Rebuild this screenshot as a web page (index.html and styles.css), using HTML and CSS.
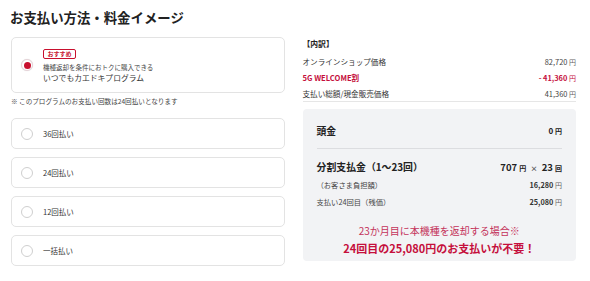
FILE: index.html
```html
<!DOCTYPE html>
<html lang="ja">
<head>
<meta charset="utf-8">
<link rel="stylesheet" href="styles.css">
</head>
<body>
<div class="page">
  <h1 class="title">お支払い方法・料金イメージ</h1>
  <div class="cols">
    <div class="left">
      <div class="card card-main">
        <span class="radio radio-on"></span>
        <div class="card-body">
          <span class="badge">おすすめ</span>
          <div class="sub">機種返却を条件におトクに購入できる</div>
          <div class="main-label">いつでもカエドキプログラム</div>
        </div>
      </div>
      <p class="note">※ このプログラムのお支払い回数は24回払いとなります</p>
      <div class="card card-opt"><span class="radio"></span><span class="opt-label">36回払い</span></div>
      <div class="card card-opt"><span class="radio"></span><span class="opt-label">24回払い</span></div>
      <div class="card card-opt"><span class="radio"></span><span class="opt-label">12回払い</span></div>
      <div class="card card-opt"><span class="radio"></span><span class="opt-label">一括払い</span></div>
    </div>
    <div class="right">
      <div class="bd-title">【内訳】</div>
      <div class="bd-list">
        <div class="bd-row"><span>オンラインショップ価格</span><span class="val">82,720 <span class="yen">円</span></span></div>
        <div class="bd-row red"><span>5G WELCOME割</span><span class="val">- 41,360 <span class="yen">円</span></span></div>
        <div class="bd-row"><span>支払い総額/現金販売価格</span><span class="val">41,360 <span class="yen">円</span></span></div>
      </div>
      <div class="box">
        <div class="box-row head"><span>頭金</span><span class="bval">0 <span class="unit">円</span></span></div>
        <div class="box-row split"><span>分割支払金（1〜23回）</span><span class="bval">707 <span class="unit">円</span> <span class="times">×</span> 23 <span class="unit">回</span></span></div>
        <div class="box-row small"><span>（お客さま負担額）</span><span class="bval">16,280 <span class="yen">円</span></span></div>
        <div class="box-row small"><span>支払い24回目（残価）</span><span class="bval">25,080 <span class="yen">円</span></span></div>
        <div class="notice">
          <div class="notice-1">23か月目に本機種を返却する場合※</div>
          <div class="notice-2">24回目の25,080円のお支払いが不要！</div>
        </div>
      </div>
    </div>
  </div>
</div>
</body>
</html>
```

FILE: styles.css
```css
* { box-sizing: border-box; }
html, body { margin: 0; padding: 0; background: #fff; }
body {
  font-family: "Noto Sans CJK JP", "Noto Sans", sans-serif;
  color: #333;
}
.page { padding: 7px 14px 0 11px; width: 590px; }
.title {
  margin: 0 0 10px -1px;
  font-size: 13.4px;
  line-height: 20px;
  font-weight: 700;
  color: #222;
}
.cols { display: flex; gap: 18px; }
.left { width: 274px; display: flex; flex-direction: column; }
.right { width: 274px; }

.card {
  border: 1px solid #e3e3e3;
  border-radius: 5px;
  background: #fff;
  display: flex;
  align-items: center;
}
.card-main { height: 56px; padding: 0 0 0 9px; }
.card-body { margin-left: 10px; display: flex; flex-direction: column; align-items: flex-start; padding-top: 2px; }
.radio {
  width: 12px; height: 12px;
  border: 1px solid #cfcfcf;
  border-radius: 50%;
  flex: none;
  display: flex; align-items: center; justify-content: center;
  background: #fff;
}
.radio-on { border-color: #e6d3d8; box-shadow: 0 0 1px rgba(0,0,0,0.15); }
.radio-on::after {
  content: "";
  width: 7px; height: 7px;
  border-radius: 50%;
  background: #c8102e;
}
.badge {
  font-size: 6px;
  line-height: 8px;
  font-weight: 700;
  color: #c8102e;
  border: 1px solid #c8102e;
  border-radius: 2px;
  padding: 0 3.5px;
  margin-bottom: 3px;
}
.sub { font-size: 6.5px; line-height: 10px; color: #444; }
.main-label { font-size: 7.8px; line-height: 12px; color: #333; }
.note {
  margin: 3px 0 11px 0;
  font-size: 6.6px;
  line-height: 11px;
  color: #444;
}
.card-opt { height: 31px; padding-left: 9px; margin-bottom: 8px; }
.opt-label { margin-left: 10px; font-size: 7.5px; color: #333; }

.bd-title { font-size: 7.8px; font-weight: 700; line-height: 13px; color: #222; margin-bottom: 3px; }
.bd-list { border-bottom: 1px solid #e6e6e6; }
.bd-row {
  display: flex; justify-content: space-between; align-items: center;
  height: 16px;
  font-size: 7.6px;
  color: #333;
}
.bd-row .val { font-size: 7.4px; color: #444; }
.yen { font-size: 7px; color: #666; }
.bd-row.red { color: #c50f3c; font-weight: 700; }
.bd-row.red .val { color: #c50f3c; }
.bd-row.red .yen { color: #c50f3c; font-weight: 400; }

.box {
  margin-top: 7px;
  background: #f2f3f5;
  border-radius: 4px;
  padding: 12px 14px 4px 14px;
}
.box-row { display: flex; justify-content: space-between; align-items: center; }
.head {
  height: 28px;
  padding-bottom: 8px;
  border-bottom: 1px solid #dcdde0;
  font-size: 9.8px; font-weight: 700; color: #222;
}
.head .bval { font-size: 8px; }
.unit { font-size: 7px; }
.split {
  margin-top: 9px;
  height: 18px;
  font-size: 9.9px; font-weight: 700; color: #222;
}
.split .bval { font-size: 9.5px; }
.times { font-size: 7px; color: #555; margin: 0 2px; }
.small { height: 17px; font-size: 7.3px; color: #444; }
.small .bval { font-size: 7.3px; font-weight: 700; color: #333; }
.small .yen { font-weight: 400; }
.notice { margin-top: 13px; text-align: center; }
.notice-1 { font-size: 10px; line-height: 16px; color: #c4325a; }
.notice-2 { font-size: 11px; line-height: 18px; font-weight: 700; color: #c50f3c; }
```
